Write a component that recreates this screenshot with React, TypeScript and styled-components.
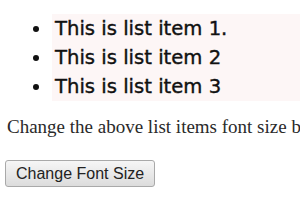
import React from 'react';
import styled, { createGlobalStyle } from 'styled-components';

const GlobalStyle = createGlobalStyle`
  html, body {
    margin: 0;
    padding: 0;
    background: #ffffff;
  }
`;

const Page = styled.div`
  padding: 14px 0 0 7px;
  width: 300px;
  height: 210px;
  box-sizing: border-box;
  overflow: hidden;
`;

const List = styled.ul`
  margin: 0 0 0 45px;
  padding: 0;
  list-style: disc outside;
`;

const Item = styled.li`
  font-family: 'Comic Sans MS', 'DejaVu Sans', sans-serif;
  font-size: 19.6px;
  line-height: 29px;
  height: 29px;
  color: #111;
  background: #fdf6f6;
  padding-left: 3px;
  white-space: nowrap;
  -webkit-text-stroke: 0.4px #111;
`;

const Note = styled.p`
  margin: 15px 0 0 0;
  font-family: 'Liberation Serif', serif;
  font-size: 19px;
  line-height: 22px;
  color: #2a2a2a;
  white-space: nowrap;
`;

const Button = styled.button`
  margin: 22px 0 0 -2px;
  height: 27px;
  padding: 0 10px;
  font-family: 'Liberation Sans', Arial, sans-serif;
  font-size: 16px;
  color: #222;
  background: linear-gradient(#f6f6f6, #dcdcdc);
  border: 1px solid #a9a9a9;
  border-radius: 3px;
`;

const items = ['This is list item 1.', 'This is list item 2', 'This is list item 3'];

const App = () => {
  return (
    <Page>
      <GlobalStyle />
      <List>
        {items.map((text) => (
          <Item key={text}>{text}</Item>
        ))}
      </List>
      <Note>Change the above list items font size by clicking the button.</Note>
      <Button>Change Font Size</Button>
    </Page>
  );
};

export default App;
